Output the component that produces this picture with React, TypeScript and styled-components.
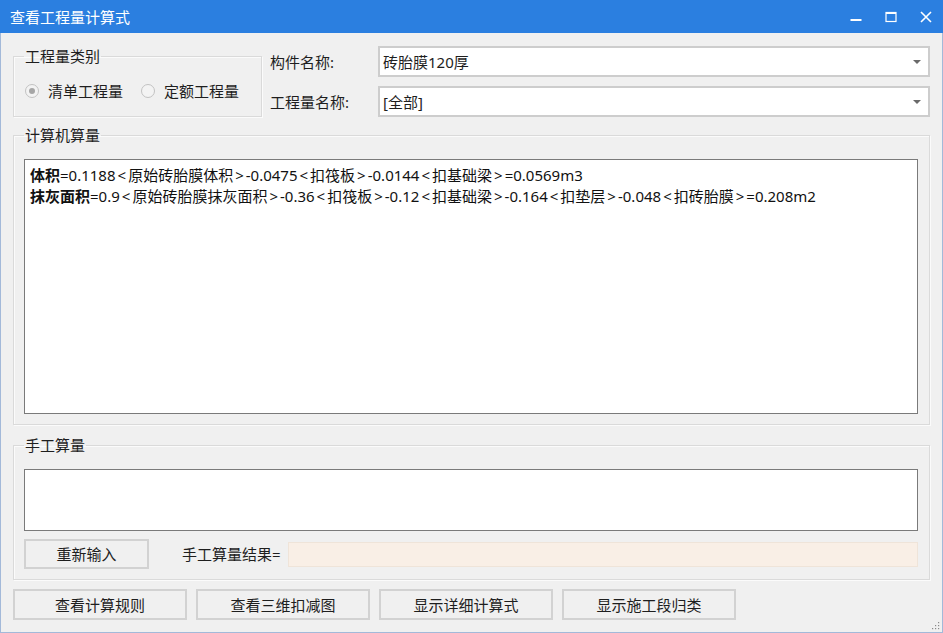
import React from 'react';
import styled, { createGlobalStyle } from 'styled-components';

const GlobalStyle = createGlobalStyle`
	html, body {
		margin: 0;
		padding: 0;
	}
	body {
		font-family: "Noto Sans", "Noto Sans CJK SC", sans-serif;
		font-size: 15px;
		color: #1e1e1e;
		background: #f0f0f0;
	}
	* {
		box-sizing: border-box;
	}
`;

const formulaLines = [
	{
		name: '体积',
		expr: '=0.1188<原始砖胎膜体积>-0.0475<扣筏板>-0.0144<扣基础梁>=0.0569m3',
	},
	{
		name: '抹灰面积',
		expr: '=0.9<原始砖胎膜抹灰面积>-0.36<扣筏板>-0.12<扣基础梁>-0.164<扣垫层>-0.048<扣砖胎膜>=0.208m2',
	},
];

const footerButtons = ['查看计算规则', '查看三维扣减图', '显示详细计算式', '显示施工段归类'];

// the angle brackets sit wider in the original font, so give them some air
const renderExpr = (expr: string) =>
	expr.split(/([<>])/).map((part, i) =>
		part === '<' || part === '>' ? <Bracket key={i}>{part}</Bracket> : part
	);

const App = () => (
	<>
		<GlobalStyle />
		<Window>
			<TitleBar>
				<Title>查看工程量计算式</Title>
				<Controls>
					<ControlButton>
						<svg width="12" height="12" viewBox="0 0 12 12">
							<rect x="0.5" y="8" width="11" height="2" fill="#fff" />
						</svg>
					</ControlButton>
					<ControlButton>
						<svg width="12" height="12" viewBox="0 0 12 12">
							<rect x="1" y="1.5" width="10" height="9" fill="none" stroke="#fff" strokeWidth="1.2" />
							<rect x="1" y="1" width="10" height="2" fill="#fff" />
						</svg>
					</ControlButton>
					<ControlButton>
						<svg width="12" height="12" viewBox="0 0 12 12">
							<path d="M1 1 L11 11 M11 1 L1 11" stroke="#fff" strokeWidth="1.6" />
						</svg>
					</ControlButton>
				</Controls>
			</TitleBar>

			<Content>
				<TopRow>
					<TypeGroup>
						<Legend>工程量类别</Legend>
						<RadioRow>
							<RadioItem>
								<RadioCircle checked />
								清单工程量
							</RadioItem>
							<RadioItem>
								<RadioCircle />
								定额工程量
							</RadioItem>
						</RadioRow>
					</TypeGroup>
					<Fields>
						<FieldRow>
							<FieldLabel>构件名称:</FieldLabel>
							<Combo>
								<span>砖胎膜120厚</span>
								<Arrow />
							</Combo>
						</FieldRow>
						<FieldRow>
							<FieldLabel>工程量名称:</FieldLabel>
							<Combo>
								<span>[全部]</span>
								<Arrow />
							</Combo>
						</FieldRow>
					</Fields>
				</TopRow>

				<Group height={300}>
					<Legend>计算机算量</Legend>
					<TextArea height={255}>
						{formulaLines.map((line) => (
							<Line key={line.name}>
								<b>{line.name}</b>
								{renderExpr(line.expr)}
							</Line>
						))}
					</TextArea>
				</Group>

				<Group height={145} $spaced>
					<Legend>手工算量</Legend>
					<TextArea height={62} />
					<ManualRow>
						<Button width={125} height={30}>重新输入</Button>
						<ResultLabel>手工算量结果=</ResultLabel>
						<ResultBox />
					</ManualRow>
				</Group>

				<Footer>
					{footerButtons.map((label) => (
						<Button key={label} width={174} height={31}>
							{label}
						</Button>
					))}
				</Footer>
			</Content>

			<SizeGrip>
				<svg width="10" height="10" viewBox="0 0 10 10">
					<rect x="8" y="2" width="1.2" height="1.2" fill="#8a8a8a" />
					<rect x="5" y="5" width="1.2" height="1.2" fill="#8a8a8a" />
					<rect x="8" y="5" width="1.2" height="1.2" fill="#8a8a8a" />
					<rect x="2" y="8" width="1.2" height="1.2" fill="#8a8a8a" />
					<rect x="5" y="8" width="1.2" height="1.2" fill="#8a8a8a" />
					<rect x="8" y="8" width="1.2" height="1.2" fill="#8a8a8a" />
				</svg>
			</SizeGrip>
		</Window>
	</>
);

const Window = styled.div`
	position: relative;
	width: 943px;
	height: 633px;
	display: flex;
	flex-direction: column;
	background: #f0f0f0;
	border: 1px solid #a3b9d9;
	border-top: none;
`;

const TitleBar = styled.div`
	height: 33px;
	margin: 0 -1px;
	display: flex;
	align-items: center;
	justify-content: space-between;
	background: #2b7fe0;
	color: #fff;
	padding-left: 10px;
`;

const Title = styled.div`
	font-size: 15px;
	line-height: 20px;
`;

const Controls = styled.div`
	display: flex;
	height: 100%;
`;

const ControlButton = styled.div`
	width: 35px;
	height: 100%;
	display: flex;
	align-items: center;
	justify-content: center;
`;

const Content = styled.div`
	display: flex;
	flex-direction: column;
	padding: 13px 12px 0 12px;
`;

const TopRow = styled.div`
	display: flex;
	gap: 8px;
	height: 71px;
`;

const Group = styled.fieldset<{ height: number; $spaced?: boolean }>`
	margin: ${(p) => (p.$spaced ? '10px' : '8px')} 0 0 0;
	padding: 0 11px 0 10px;
	height: ${(p) => p.height}px;
	border: 1px solid #dadada;
	box-shadow: inset 1px 1px 0 #fbfbfb, 1px 1px 0 #fbfbfb;
	min-width: 0;
`;

const TypeGroup = styled(Group)`
	margin: 0;
	width: 249px;
	height: 71px;
	padding: 0 0 0 10px;
`;

const Legend = styled.legend`
	padding: 0 1px;
	font-size: 15px;
	line-height: 20px;
	color: #1e1e1e;
`;

const RadioRow = styled.div`
	display: flex;
	align-items: center;
	gap: 18px;
	height: 50px;
	padding-left: 1px;
`;

const RadioItem = styled.label`
	display: flex;
	align-items: center;
	gap: 9px;
	line-height: 20px;
`;

const RadioCircle = styled.span<{ checked?: boolean }>`
	width: 14px;
	height: 14px;
	border-radius: 50%;
	border: 1px solid #c2c2c2;
	background: #f3f3f3;
	display: flex;
	align-items: center;
	justify-content: center;

	&::after {
		content: '';
		width: 6px;
		height: 6px;
		border-radius: 50%;
		background: ${(p) => (p.checked ? '#a6a6a6' : 'transparent')};
	}
`;

const Fields = styled.div`
	flex: 1;
	display: flex;
	flex-direction: column;
	gap: 9px;
`;

const FieldRow = styled.div`
	display: flex;
	align-items: center;
	height: 31px;
`;

const FieldLabel = styled.div`
	width: 108px;
	line-height: 20px;
`;

const Combo = styled.div`
	flex: 1;
	height: 31px;
	display: flex;
	align-items: center;
	justify-content: space-between;
	background: #fff;
	border: 2px solid #cdcdcd;
	padding: 0 7px 0 3px;
	line-height: 20px;
`;

const Arrow = styled.span`
	width: 0;
	height: 0;
	border-left: 4px solid transparent;
	border-right: 4px solid transparent;
	border-top: 4px solid #6a6a6a;
`;

const TextArea = styled.div<{ height: number }>`
	height: ${(p) => p.height}px;
	margin-top: 14px;
	background: #fff;
	border: 1px solid #7a7a7a;
	padding: 5px 5px;
`;

const Line = styled.div`
	line-height: 21px;
	white-space: nowrap;
	color: #111;

	b {
		font-weight: 700;
	}
`;

const Bracket = styled.span`
	padding: 0 2px;
`;

const ManualRow = styled.div`
	display: flex;
	align-items: center;
	margin-top: 8px;
	height: 30px;
`;

const Button = styled.div<{ width: number; height: number }>`
	width: ${(p) => p.width}px;
	height: ${(p) => p.height}px;
	display: flex;
	align-items: center;
	justify-content: center;
	background: #f0f0f0;
	border: 2px solid #d2d2d2;
	line-height: 20px;
	color: #1e1e1e;
`;

const ResultLabel = styled.div`
	margin-left: 33px;
	line-height: 20px;
`;

const ResultBox = styled.div`
	flex: 1;
	height: 25px;
	margin-left: 7px;
	background: #f9efe6;
	border: 1px solid #efe4d9;
`;

const Footer = styled.div`
	display: flex;
	gap: 9px;
	margin-top: 9px;
`;

const SizeGrip = styled.div`
	position: absolute;
	right: 2px;
	bottom: 2px;
	width: 10px;
	height: 10px;
	display: flex;
`;

export default App;
